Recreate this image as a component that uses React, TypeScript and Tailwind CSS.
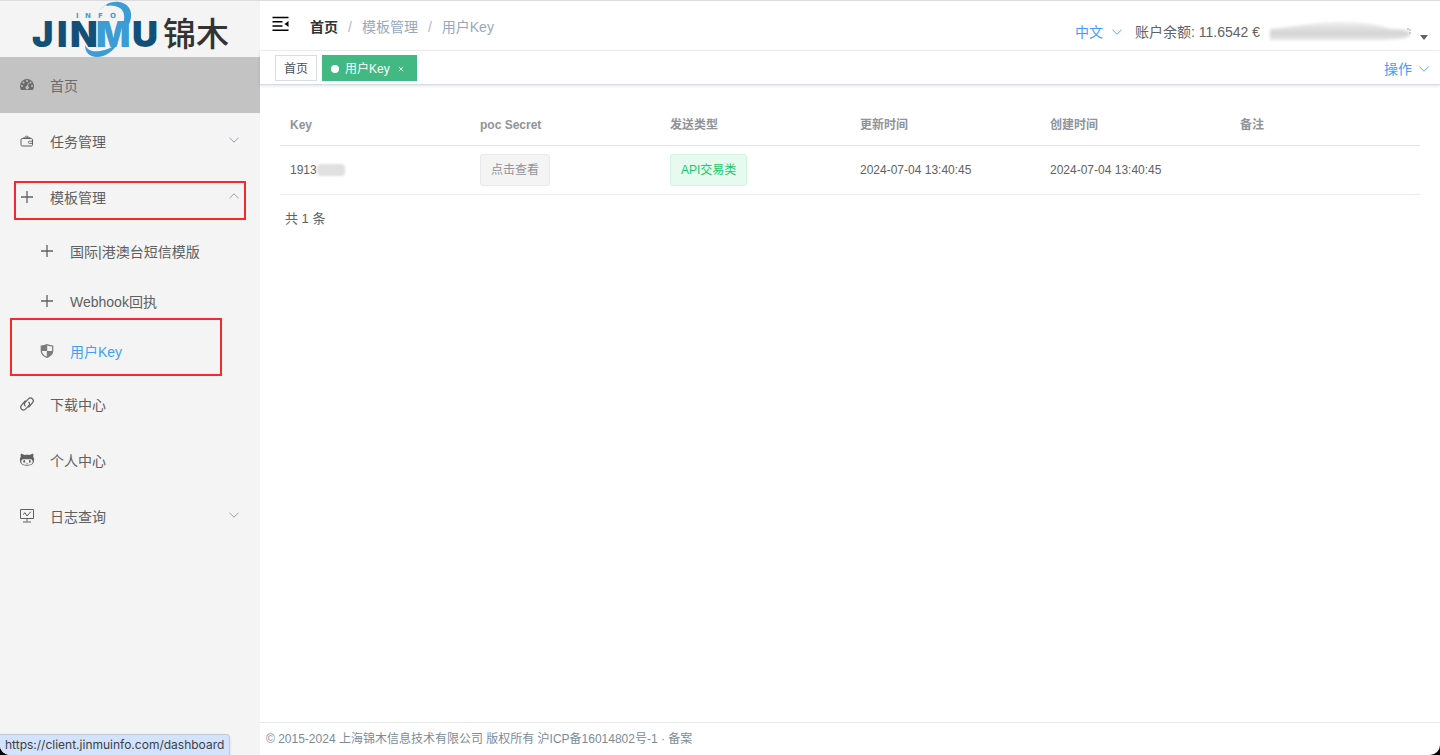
import { useState } from 'react';
import type { ReactNode } from 'react';

function DashboardIcon() {
  return (
    <svg viewBox="0 0 16 16" className="size-4" fill="currentColor" aria-hidden="true">
      <path
        fillRule="evenodd"
        d="M8 2a7 7 0 0 0-7 7c0 1.500.4 2.800 1 3.700.2.200.4.300.6.300h10.800c.2 0 .4-.1.600-.3.600-.9 1-2.200 1-3.700a7 7 0 0 0-7-7ZM8 3.100a1 1 0 1 1 0 2 1 1 0 0 1 0-2ZM4.500 4.600a1 1 0 1 1 0 2 1 1 0 0 1 0-2Zm7 0a1 1 0 1 1 0 2 1 1 0 0 1 0-2ZM3 8a1 1 0 1 1 0 2 1 1 0 0 1 0-2Zm10 0a1 1 0 1 1 0 2 1 1 0 0 1 0-2ZM9 5.700l.8.2-.8 3.300a1.600 1.600 0 1 1-.9-.2L9 5.700Z"
      />
    </svg>
  );
}

function WalletIcon() {
  return (
    <svg viewBox="0 0 16 16" className="size-4" fill="none" stroke="currentColor" aria-hidden="true">
      <rect x="2" y="5.500" width="11.500" height="7.500" rx="1.200" />
      <path d="M3.500 5.500 7.800 3l4.200 2.500M5.500 5.500 8 4.200l2.200 1.300" strokeWidth=".8" />
      <path d="M13.800 8.200h-3.300a1.100 1.100 0 0 0 0 2.200h3.300" strokeWidth=".9" />
    </svg>
  );
}

function PlusIcon() {
  return (
    <svg viewBox="0 0 16 16" className="size-4" fill="none" stroke="currentColor" strokeWidth="1.300" aria-hidden="true">
      <path d="M8 2v12M2 8h12" />
    </svg>
  );
}

function ShieldIcon() {
  return (
    <svg viewBox="0 0 16 16" className="size-4 text-[#7c7c7c]" aria-hidden="true">
      <path d="M8 1c2 .9 4 1.300 6.300 1.400v5.400c0 3.500-2.700 6.100-6.300 7.200-3.600-1.100-6.300-3.700-6.300-7.200V2.400C4 2.300 6 1.900 8 1Z" fill="currentColor" />
      <path d="M8.200 2.400c1.600.6 3.100.9 4.900 1.100V8H8.200ZM7.800 8v5.600C4.900 12.600 3 10.500 2.900 8Z" fill="#f4f4f4" />
    </svg>
  );
}

function LinkIcon() {
  return (
    <svg viewBox="0 0 16 16" className="size-4" fill="none" stroke="currentColor" strokeWidth="1.200" strokeLinecap="round" aria-hidden="true">
      <path d="M6.200 9.900c-1-1-1-2.400 0-3.500l3-3.300c1.200-1.300 3-1.400 4.100-.4 1.200 1.100 1.200 2.900.1 4.200L9.800 11" />
      <path d="M9.800 6.100c1 1 1 2.400 0 3.500l-3 3.300c-1.200 1.300-3 1.400-4.100.4-1.200-1.100-1.200-2.900-.1-4.200L6.200 5" />
    </svg>
  );
}

function CatIcon() {
  return (
    <svg viewBox="0 0 16 16" className="size-4" aria-hidden="true">
      <path d="M1.900 1.800c1.200 0 2.400.6 3.400 1.300 1.800-.4 3.600-.4 5.400 0 1-.7 2.200-1.300 3.400-1.300.4 1 .4 2 .1 2.900.7.900 1 2 .9 3.400-.2 4-2.600 5.600-7.100 5.600S1.100 12.100.9 8.100c-.1-1.400.2-2.500.9-3.400-.3-.9-.3-1.900.1-2.900Z" fill="currentColor" />
      <path d="M4.300 7.200c1-.1 2.300.1 3.700.1s2.700-.2 3.700-.1c1.300.1 2 1 2 2.200 0 2.600-2.200 3.300-5.700 3.300s-5.700-.7-5.700-3.300c0-1.200.7-2.100 2-2.200Z" fill="#f4f4f4" />
      <ellipse cx="5.200" cy="9.400" rx=".9" ry="1.300" fill="currentColor" />
      <ellipse cx="10.800" cy="9.400" rx=".9" ry="1.300" fill="currentColor" />
      <path d="M7.200 11.400q.8.500 1.600 0" stroke="currentColor" strokeWidth=".6" fill="none" />
    </svg>
  );
}

function MonitorIcon() {
  return (
    <svg viewBox="0 0 16 16" className="size-4" fill="none" stroke="currentColor" aria-hidden="true">
      <path d="M1.500 1.500h13v9h-13ZM8 10.500v3M4 14h8" />
      <path d="m4 6.500 2-1.800L8 8l3.800-4.300" />
    </svg>
  );
}

function Chevron({ up = false }: { up?: boolean }) {
  return (
    <svg viewBox="0 0 12 12" className="size-3" fill="none" stroke="currentColor" strokeWidth=".9" aria-hidden="true">
      <path d={up ? 'm1.500 8.200 4.500-4.400 4.500 4.400' : 'm1.500 3.800 4.500 4.400 4.500-4.400'} />
    </svg>
  );
}

function Logo() {
  return (
    <a href="#home" aria-label="JINMU 锦木" className="block h-14 shrink-0">
      <svg viewBox="0 1 260 56" className="h-14 w-[260px]">
        <path d="M99 11C104 4 112 1 119 2c8 1 13 7 12 15-.3 3-1 5-2 7h-6c2-6 2-12-3-16-5-3-10-3-14-2l1-2c-3 2-6 4-8 7Z" fill="#3b9cd6" />
        <path d="M85 45c3 6 8 7 15 6 6-1 12-3 18-8-4 8-13 14-21 14-7 0-12-4-12-12Z" fill="#3b9cd6" />
        <text y="18" fontFamily="'DejaVu Sans', sans-serif" fontSize="7" fontWeight="700" fill="#3b9cd6">
          <tspan x="76">I</tspan>
          <tspan x="85">N</tspan>
          <tspan x="98">F</tspan>
          <tspan x="110">O</tspan>
        </text>
        <g fontFamily="Inter, sans-serif" fontSize="36" fontWeight="900">
          <text y="47" fill="#12507a">
            <tspan x="32">J</tspan>
            <tspan x="57">I</tspan>
            <tspan x="70">N</tspan>
          </text>
          <text x="96" y="47" fill="#3b9cd6">M</text>
          <text x="132" y="47" fill="#12507a">U</text>
        </g>
        <text x="163" y="46" fontFamily="'Noto Sans CJK SC', sans-serif" fontSize="33" fontWeight="500" fill="#333333">锦木</text>
      </svg>
    </a>
  );
}

type ItemProps = { icon: ReactNode; label: string; arrow?: 'up' | 'down'; active?: boolean };

function MenuItem({ icon, label, arrow, active = false }: ItemProps) {
  return (
    <a
      href={'#' + label}
      className={
        active
          ? 'flex h-14 items-center bg-[#c3c3c3] px-5 text-[#6b6b6b]'
          : 'flex h-14 items-center px-5 text-[#606060]'
      }
    >
      <span className="-ml-px mr-[15px]">{icon}</span>
      <span className="flex-1 pt-0.5">{label}</span>
      {arrow && (
        <span className="pb-0.5 text-[#909399]">
          <Chevron up={arrow === 'up'} />
        </span>
      )}
    </a>
  );
}

function SubItem({ icon, label, current = false }: { icon: ReactNode; label: string; current?: boolean }) {
  return (
    <a href={'#' + label} className="flex h-[50px] items-center pl-10 text-[#606060]">
      <span className="-ml-px mr-[15px]">{icon}</span>
      <span className={current ? 'pt-0.5 text-[#409eff]' : 'pt-0.5'}>{label}</span>
    </a>
  );
}

function Sidebar() {
  return (
    <aside className="flex w-[260px] shrink-0 flex-col bg-[#f4f4f4]">
      <Logo />
      <nav aria-label="主菜单" className="text-sm">
        <MenuItem icon={<DashboardIcon />} label="首页" active />
        <MenuItem icon={<WalletIcon />} label="任务管理" arrow="down" />
        <div className="relative">
          <MenuItem icon={<PlusIcon />} label="模板管理" arrow="up" />
          <div className="pointer-events-none absolute top-3 right-3.5 left-3.5 h-[39px] border-2 border-[#f5282c]" />
        </div>
        <div className="pt-px">
          <SubItem icon={<PlusIcon />} label="国际|港澳台短信模版" />
          <SubItem icon={<PlusIcon />} label="Webhook回执" />
          <div className="relative">
            <SubItem icon={<ShieldIcon />} label="用户Key" current />
            <div className="pointer-events-none absolute -top-2 left-2.5 h-[58px] w-[212px] border-2 border-[#f5282c]" />
          </div>
        </div>
        <MenuItem icon={<LinkIcon />} label="下载中心" />
        <MenuItem icon={<CatIcon />} label="个人中心" />
        <MenuItem icon={<MonitorIcon />} label="日志查询" arrow="down" />
      </nav>
    </aside>
  );
}

function TopBar() {
  return (
    <header className="flex h-[50px] items-center justify-between border-b border-[#f0f0f0] px-3">
      <div className="flex items-center">
        <button type="button" aria-label="收起菜单" className="mr-[21px] pb-1 text-black">
          <svg viewBox="0 0 17 16" className="h-4 w-[17px]" fill="none" stroke="currentColor" strokeWidth="1.500">
            <path d="M.5 1.500h16M.5 5.800h10M.5 10h10M.5 14.300h16" />
            <path d="M16.500 5v6L12.500 8Z" fill="currentColor" stroke="none" />
          </svg>
        </button>
        <nav aria-label="面包屑" className="flex pt-0.5 text-sm text-[#97a8be]">
          <a href="#home" className="font-bold text-[#303133]">首页</a>
          <span className="mx-2.5 text-[#b4b8c0]">/</span>
          <span>模板管理</span>
          <span className="mx-2.5 text-[#b4b8c0]">/</span>
          <span>用户Key</span>
        </nav>
      </div>
      <div className="flex items-center pt-3 text-sm text-[#606266]">
        <button type="button" className="mr-3 flex items-center gap-2 text-[#409eff]">
          中文
          <Chevron />
        </button>
        <span>账户余额: 11.6542 €</span>
        <button type="button" aria-label="账户菜单" className="ml-2 flex items-center">
          <svg viewBox="0 0 146 24" className="h-6 w-[146px]">
            <defs>
              <filter id="smudge" x="-5%" y="-20%" width="110%" height="140%">
                <feGaussianBlur stdDeviation="1.500" />
              </filter>
              <linearGradient id="smudge-tone" x1="0" y1="0" x2="0" y2="1">
                <stop offset="0" stopColor="#eeeeee" />
                <stop offset=".65" stopColor="#d4d4d4" />
                <stop offset="1" stopColor="#e6e6e6" />
              </linearGradient>
            </defs>
            <path d="M2 9C25 7 40 3 70 2c25 0 40 3 52 7 14 0 20 1 20 5 0 4-10 5-24 6H2Z" fill="url(#smudge-tone)" filter="url(#smudge)" />
            <path d="M139 9h3v6" fill="none" stroke="#aaa" strokeDasharray="2 1" />
          </svg>
          <svg viewBox="0 0 8 5" className="mt-3 ml-1.5 h-[5px] w-2" fill="#606266">
            <path d="M0 0h8L4 5Z" />
          </svg>
        </button>
      </div>
    </header>
  );
}

function TabsBar({ open, onClose }: { open: boolean; onClose: () => void }) {
  return (
    <div className="flex h-[34px] items-center justify-between border-b border-[#d8dce5] pr-2.5 pl-[15px] shadow-[0_1px_3px_rgba(0,0,0,0.12)]">
      <div className="flex gap-[5px] text-xs">
        <a href="#home" className="flex h-[26px] items-center border border-[#d8dce5] px-2 pt-0.5 text-[#495060]">首页</a>
        {open && (
          <div className="flex h-[26px] items-center bg-[#42b983] px-2 pt-0.5 text-white">
            <span className="mr-1.5 ml-px size-2 rounded-full bg-white" />
            用户Key
            <button type="button" aria-label="关闭" onClick={onClose} className="ml-[3px] flex size-4 items-center justify-center">
              <svg viewBox="0 0 6 6" className="size-1.5" stroke="currentColor" strokeWidth=".8">
                <path d="m.8.8 4.400 4.400M5.200.8.8 5.200" />
              </svg>
            </button>
          </div>
        )}
      </div>
      <button type="button" className="flex items-center gap-1.5 pt-0.5 text-sm text-[#409eff]">
        操作
        <Chevron />
      </button>
    </div>
  );
}

const columns = ['Key', 'poc Secret', '发送类型', '更新时间', '创建时间', '备注'];

function KeyTable() {
  return (
    <section className="flex-1 px-5 pt-[21px]">
      <table className="w-full table-fixed border-collapse text-left text-xs text-[#606266]">
        <thead>
          <tr className="h-[39px] border-b border-[#dfe6ec] text-[#909399]">
            {columns.map((name) => (
              <th key={name} scope="col" className="px-2.5 font-bold">{name}</th>
            ))}
          </tr>
        </thead>
        <tbody>
          <tr className="h-[49px] border-b border-[#e6ebf5]">
            <td className="px-2.5">
              <span className="flex items-center">
                1913
                <span className="h-3 w-7 rounded-sm bg-[#e0e0e0] blur-[1px]" />
              </span>
            </td>
            <td className="px-2.5">
              <button type="button" className="h-8 rounded-[3px] border border-[#e9e9eb] bg-[#f4f4f5] px-2.5 text-[#909399]">
                点击查看
              </button>
            </td>
            <td className="px-2.5">
              <span className="inline-flex h-8 items-center rounded-[3px] border border-[#d0f5e0] bg-[#e7faf0] px-2.5 text-[#13ce66]">
                API交易类
              </span>
            </td>
            <td className="px-2.5">2024-07-04 13:40:45</td>
            <td className="px-2.5">2024-07-04 13:40:45</td>
            <td className="px-2.5" />
          </tr>
        </tbody>
      </table>
      <p className="px-[5px] pt-3.5 text-[13px] leading-5 text-[#606266]">共 1 条</p>
    </section>
  );
}

export default function App() {
  const [tabOpen, setTabOpen] = useState(true);
  return (
    <div className="bg-black font-['Liberation_Sans','Noto_Sans_CJK_SC',sans-serif]">
      <div className="relative flex min-h-screen overflow-hidden rounded-b-[10px] border-t border-[#dcdcdc] bg-white">
        <Sidebar />
        <div className="flex min-w-0 flex-1 flex-col">
          <TopBar />
          <TabsBar open={tabOpen} onClose={() => setTabOpen(false)} />
          <main className="flex flex-1 flex-col">
            <KeyTable />
          </main>
          <footer className="flex h-[33px] items-center border-t border-[#e7eaec] px-1.5 text-xs text-[#7a8b9a]">
            © 2015-2024 上海锦木信息技术有限公司 版权所有 沪ICP备16014802号-1 · 备案
          </footer>
        </div>
        <div className="absolute bottom-0 left-0 flex h-[21px] items-center rounded-tr border-t border-r border-[#c3cbdb] bg-[#d3e3fd] px-[5px] font-['Inter',sans-serif] text-xs text-[#3c4043] shadow">
          https://client.jinmuinfo.com/dashboard
        </div>
      </div>
    </div>
  );
}
